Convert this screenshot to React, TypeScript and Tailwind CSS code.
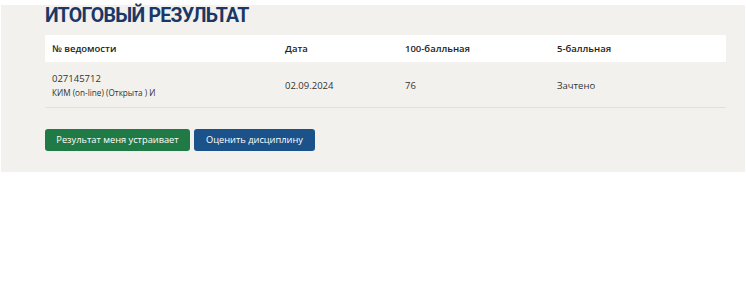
import React from "react";

export default function App() {
  const cols = "grid grid-cols-[233px_120px_152px_176px]";
  return (
    <div className="w-[746px] h-[292px] bg-white pt-[5px]" style={{ fontFamily: '"Open Sans", "Noto Sans", sans-serif' }}>
      <div className="ml-[1px] w-[744px] h-[167px] bg-[#f2f1ee] pl-[44px]">
        <h1
          className="text-[19.5px] leading-[16px] font-bold text-[#1b3766] tracking-[-0.75px] pt-[3px] h-[30px]"
          style={{ fontFamily: 'Roboto, "Open Sans", sans-serif' }}
        >
          ИТОГОВЫЙ РЕЗУЛЬТАТ
        </h1>
        <div className="w-[681px]">
          <div className={`${cols} h-[27px] pt-[2px] items-center bg-white text-[9.5px] font-semibold text-[#222]`}>
            <div className="pl-[7px]">№ ведомости</div>
            <div className="pl-[7px]">Дата</div>
            <div className="pl-[7px]">100-балльная</div>
            <div className="pl-[7px]">5-балльная</div>
          </div>
          <div className={`${cols} h-[46px] pt-[3px] items-center border-b border-[#e2e0dc] text-[9.5px] text-[#333]`}>
            <div className="pl-[7px] flex flex-col leading-[14px]">
              <span>027145712</span>
              <span className="text-[8.2px]">КИМ (on-line) (Открыта ) И</span>
            </div>
            <div className="pl-[7px]">02.09.2024</div>
            <div className="pl-[7px]">76</div>
            <div className="pl-[7px]">Зачтено</div>
          </div>
        </div>
        <div className="flex gap-[4px] mt-[21px]">
          <button className="h-[22px] w-[145px] rounded-[3px] bg-[#1f7a46] text-white text-[9.25px]">
            Результат меня устраивает
          </button>
          <button className="h-[22px] w-[121px] rounded-[3px] bg-[#1b528a] text-white text-[9.25px]">
            Оценить дисциплину
          </button>
        </div>
      </div>
    </div>
  );
}
